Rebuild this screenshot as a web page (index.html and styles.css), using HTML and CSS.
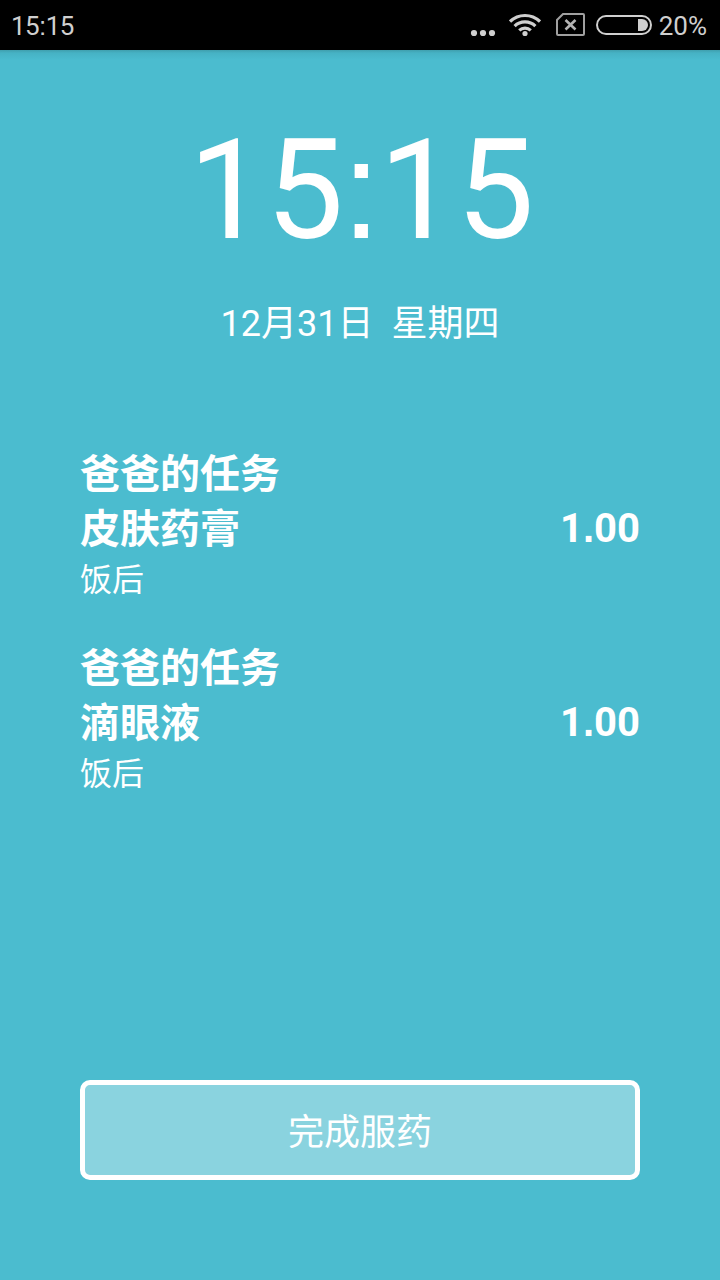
FILE: index.html
```html
<!DOCTYPE html>
<html lang="zh-CN">
<head>
    <meta charset="UTF-8">
    <meta name="viewport" content="width=device-width, initial-scale=1.0">
    <title>服药提醒</title>
    <link rel="stylesheet" href="styles.css">
</head>
<body>
    <div class="status-bar">
        <span class="status-time">15<span class="colon">:</span>15</span>
        <div class="status-icons">
            <svg class="dots" width="26" height="8" viewBox="0 0 26 8" fill="#cfcfcf">
                <circle cx="4" cy="4" r="3.1"/>
                <circle cx="13" cy="4" r="3.1"/>
                <circle cx="22" cy="4" r="3.1"/>
            </svg>
            <svg class="wifi" width="32" height="24" viewBox="0 0 32 24" fill="none" stroke="#cfcfcf" stroke-width="3.2">
                <path d="M1 8.6a21.5 21.5 0 0 1 30 0"/>
                <path d="M5.6 13.1a15 15 0 0 1 20.8 0"/>
                <path d="M10.2 17.4a8.7 8.7 0 0 1 11.6 0"/>
                <circle cx="16" cy="20.5" r="2.6" fill="#cfcfcf" stroke="none"/>
            </svg>
            <svg class="sim" width="29" height="24" viewBox="0 0 29 24" fill="none" stroke="#a0a0a0" stroke-width="2">
                <path d="M7 1h20a1 1 0 0 1 1 1v19a1 1 0 0 1-1 1H2a1 1 0 0 1-1-1V7z"/>
                <path d="M9.5 7l10 9.5M19.5 7l-10 9.5" stroke="#b4b4b4" stroke-width="2.6"/>
            </svg>
            <svg class="battery" width="56" height="20" viewBox="0 0 56 20">
                <rect x="1" y="1" width="54" height="18" rx="9" fill="none" stroke="#cfcfcf" stroke-width="2"/>
                <path d="M42 4h4a6 6 0 0 1 0 12h-4z" fill="#cfcfcf"/>
            </svg>
            <span class="percent">20%</span>
        </div>
    </div>

    <div class="page">
        <div class="clock">15<span class="colon">:</span>15</div>
        <div class="date">12月31日&nbsp; 星期四</div>

        <div class="task-list">
            <div class="task">
                <div class="task-owner">爸爸的任务</div>
                <div class="task-row">
                    <span>皮肤药膏</span>
                    <span class="dose">1<span class="point">.</span>00</span>
                </div>
                <div class="task-note">饭后</div>
            </div>
            <div class="task">
                <div class="task-owner">爸爸的任务</div>
                <div class="task-row">
                    <span>滴眼液</span>
                    <span class="dose">1<span class="point">.</span>00</span>
                </div>
                <div class="task-note">饭后</div>
            </div>
        </div>

        <button class="done">完成服药</button>
    </div>
</body>
</html>
```
FILE: styles.css
```css
* {
    box-sizing: border-box;
}
body {
    margin: 0;
    height: 1280px;
    display: flex;
    flex-direction: column;
    overflow: hidden;
    background-color: #4bbccf;
    color: #fff;
    font-family: Roboto, "Noto Sans CJK SC", sans-serif;
}
.status-bar {
    display: flex;
    align-items: center;
    justify-content: space-between;
    height: 50px;
    padding: 2px 13px 0 11px;
    background-color: #000;
    color: #cfcfcf;
    font-size: 26px;
}
.status-time {
    letter-spacing: -0.6px;
}
/* square dots */
.colon,
.point {
    font-family: "Liberation Sans", sans-serif;
    line-height: 1;
}
.status-icons {
    display: flex;
    align-items: center;
}
.status-icons svg {
    margin-top: -2px;
}
.status-icons .dots {
    margin: 14px 13px 0 0;
}
.wifi {
    margin-right: 15px;
}
.sim {
    margin-right: 11px;
}
.battery {
    margin-right: 7px;
}
.page {
    flex: 1;
    display: flex;
    flex-direction: column;
    padding: 58px 80px 100px;
    background: linear-gradient(#3f9fae, #46b2c4 3px, #4bbccf 10px);
}
.clock {
    height: 165px;
    line-height: 165px;
    font-size: 139px;
    letter-spacing: -0.8px;
    text-indent: 2px;
    text-align: center;
}
.clock .colon {
    margin: 0 -1px;
}
.date {
    height: 52px;
    margin-top: 25px;
    line-height: 52px;
    font-size: 36px;
    text-align: center;
}
.task-list {
    flex: 1;
    margin-top: 97px;
}
.task {
    margin-bottom: 30px;
    height: 164px;
}
.task-owner,
.task-row {
    height: 55px;
    line-height: 55px;
    font-size: 40px;
    font-weight: bold;
}
.task-row {
    display: flex;
    justify-content: space-between;
}
.dose {
    margin-top: -1px;
}
.task-note {
    height: 50px;
    line-height: 47px;
    font-size: 32px;
}
.done {
    height: 100px;
    padding-bottom: 3px;
    border: 5px solid #fff;
    border-radius: 10px;
    background-color: #8ad3df;
    color: #fff;
    font-family: inherit;
    font-size: 36px;
}
```
